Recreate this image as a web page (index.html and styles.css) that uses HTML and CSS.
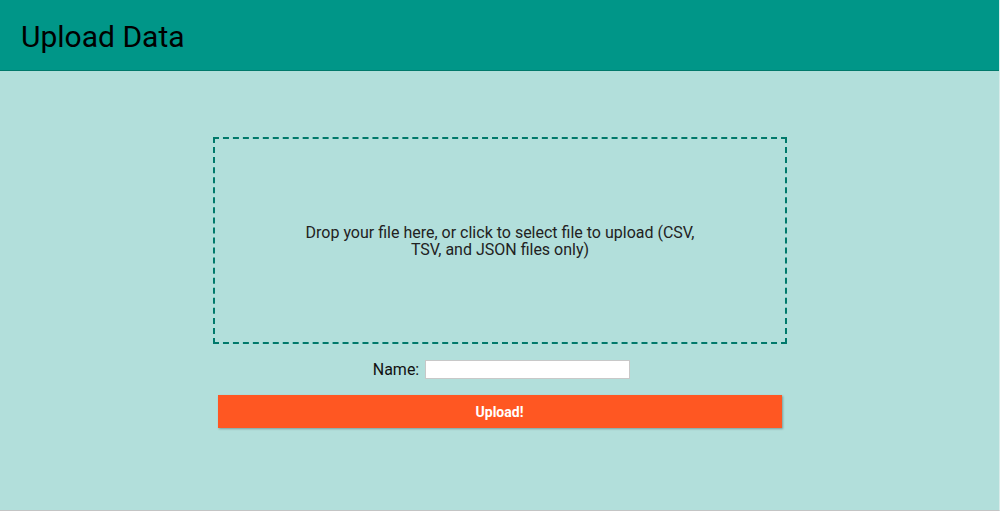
FILE: index.html
```html
<!DOCTYPE html>
<html>
<head>
<meta charset="utf-8">
<link rel="stylesheet" href="styles.css">
</head>
<body>
<div class="app">
  <header class="topbar">
    <h1 class="title">Upload Data</h1>
  </header>
  <main class="content">
    <div class="dropzone">
      <p class="dropzone-text">Drop your file here, or click to select file to upload (CSV, TSV, and JSON files only)</p>
    </div>
    <div class="name-row">
      <label class="name-label" for="name">Name:</label>
      <input class="name-input" id="name" type="text">
    </div>
    <button class="upload-btn">Upload!</button>
  </main>
</div>
</body>
</html>
```
FILE: styles.css
```css
html, body {
  margin: 0;
  padding: 0;
}
body {
  font-family: Roboto, "Liberation Sans", sans-serif;
  background: #b2dfdb;
}
.app {
  height: 510px;
  border-bottom: 1px solid #c4c4c4;
  border-right: 1px solid #d9ecea;
  box-sizing: content-box;
  width: 999px;
  display: flex;
  flex-direction: column;
  background: #b2dfdb;
}
.topbar {
  height: 70px;
  background: #009688;
  border-bottom: 1px solid #00796b;
  display: flex;
  align-items: center;
  padding-left: 21px;
}
.title {
  margin: 0;
  font-weight: 400;
  font-size: 30px;
  color: #000;
  position: relative;
  top: 1px;
}
.content {
  display: flex;
  flex-direction: column;
  align-items: center;
  padding-top: 66px;
}
.dropzone {
  width: 570px;
  height: 203px;
  border: 2px dashed #00796b;
  display: flex;
  align-items: center;
  justify-content: center;
  margin-left: 1px;
}
.dropzone-text {
  width: 400px;
  margin: 0;
  text-align: center;
  font-size: 16px;
  line-height: 17px;
  color: #222;
}
.name-row {
  margin-top: 16px;
  display: flex;
  align-items: center;
  gap: 6px;
  margin-left: 4px;
}
.name-label {
  font-size: 16px;
  color: #111;
}
.name-input {
  box-sizing: border-box;
  width: 205px;
  height: 19px;
  border: 1px solid #c8c8c8;
  padding: 1px;
  margin: 0;
  background: #fff;
}
.upload-btn {
  margin-top: 16px;
  width: 564px;
  height: 33px;
  border: none;
  background: #ff5722;
  color: #fff;
  font-family: Roboto, "Liberation Sans", sans-serif;
  font-weight: 700;
  font-size: 14px;
  box-shadow: 1px 1px 2px rgba(0,0,0,0.3);
}
```
